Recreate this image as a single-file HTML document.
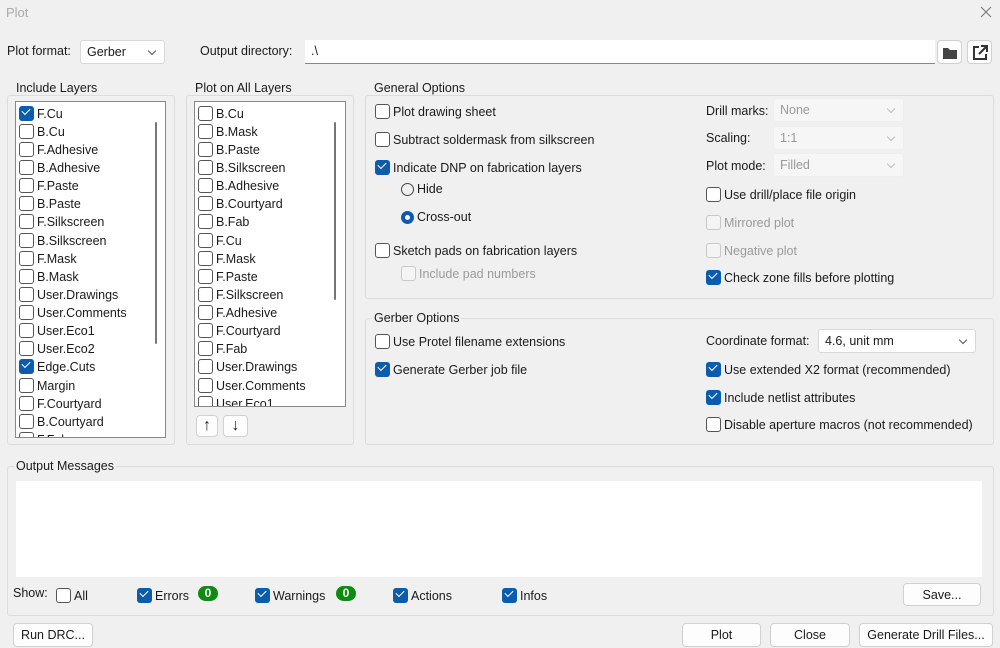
<!DOCTYPE html>
<html><head><meta charset="utf-8"><style>
*{box-sizing:border-box}
body{margin:0;width:1000px;height:648px;background:#f0f0f0;font-family:"Liberation Sans",sans-serif;font-size:12.5px;color:#1a1a1a;position:relative;overflow:hidden}
.a{position:absolute;white-space:nowrap}
.g{position:absolute;border:1px solid #dcdcdc;border-radius:3px}
.gl{position:absolute;background:#f0f0f0;padding:0 2px;white-space:nowrap}
.cb{position:absolute;white-space:nowrap;line-height:14px}
.cb::before{content:"";display:inline-block;width:13px;height:13px;border:1px solid #555;border-radius:3px;vertical-align:-3px;margin-right:3px;background:#fff}
.cb.c::before{background:#0b5cad;border-color:#0b5cad}
.cb.c .k{position:absolute;left:3px;top:2px;width:8px;height:5px;border-left:1.6px solid #fff;border-bottom:1.6px solid #fff;transform:rotate(-45deg)}
.cb.d{color:#9a9a9a}.cb.d::before{border-color:#c8c8c8;background:#f4f4f4}
.list{position:absolute;background:#fff;border:1px solid #888;overflow:hidden}
.list .cb{left:3px}
.sb{position:absolute;width:2px;background:#777;border-radius:1px}
.btn{position:absolute;background:#fdfdfd;border:1px solid #d0d0d0;border-radius:4px;text-align:center;line-height:22px}
.sel{position:absolute;border:1px solid #d8d8d8;border-radius:3px;background:#fff;padding-left:6px;line-height:22px}
.sel::after{content:"";position:absolute;right:9px;top:7px;width:5px;height:5px;border-right:1px solid #555;border-bottom:1px solid #555;transform:rotate(45deg)}
.sel.d{background:#f6f6f6;color:#999;border-color:#eee}
.sel.d::after{border-color:#bbb}
.badge{position:absolute;width:20px;height:15px;border-radius:8px;background:#0f8a12;color:#fff;font-weight:bold;text-align:center;line-height:15px;font-size:12px}
</style></head><body>
<div class="a" style="left:6px;top:5px;color:#aaa;font-size:13px">Plot</div>
<svg class="a" style="left:980px;top:6px" width="12" height="12" viewBox="0 0 12 12"><path d="M1 1L11 11M11 1L1 11" stroke="#777" stroke-width="1.1"/></svg>

<div class="a" style="left:7px;top:44px">Plot format:</div>
<div class="sel" style="left:80px;top:40px;width:85px;height:24px">Gerber</div>
<div class="a" style="left:200px;top:44px">Output directory:</div>
<div class="a" style="left:305px;top:40px;width:630px;height:24px;background:#fff;border-bottom:1px solid #888;padding-left:6px;line-height:22px">.\</div>
<div class="btn" style="left:937px;top:40px;width:25px;height:24px"><svg width="16" height="14" style="margin-top:5px" viewBox="0 0 16 14"><path d="M1 2h5l2 2h7v9H1z" fill="#444"/></svg></div>
<div class="btn" style="left:967px;top:40px;width:25px;height:24px"><svg width="16" height="16" style="margin-top:4px" viewBox="0 0 16 16"><path d="M7 2H2v12h12V9" fill="none" stroke="#333" stroke-width="2"/><path d="M9 1h6v6M15 1L7 9" fill="none" stroke="#333" stroke-width="2"/></svg></div>

<div class="g" style="left:7px;top:95px;width:168px;height:350px"></div>
<div class="gl" style="left:14px;top:81px">Include Layers</div>
<div class="list" style="left:15px;top:101px;width:151px;height:337px">
<div class="sb" style="left:139px;top:20px;height:222px"></div>
<div class="cb c" style="top:4px"><i class="k"></i>F.Cu</div>
<div class="cb" style="top:22px">B.Cu</div>
<div class="cb" style="top:40px">F.Adhesive</div>
<div class="cb" style="top:58px">B.Adhesive</div>
<div class="cb" style="top:76px">F.Paste</div>
<div class="cb" style="top:94px">B.Paste</div>
<div class="cb" style="top:112px">F.Silkscreen</div>
<div class="cb" style="top:131px">B.Silkscreen</div>
<div class="cb" style="top:149px">F.Mask</div>
<div class="cb" style="top:167px">B.Mask</div>
<div class="cb" style="top:185px">User.Drawings</div>
<div class="cb" style="top:203px">User.Comments</div>
<div class="cb" style="top:221px">User.Eco1</div>
<div class="cb" style="top:239px">User.Eco2</div>
<div class="cb c" style="top:257px"><i class="k"></i>Edge.Cuts</div>
<div class="cb" style="top:276px">Margin</div>
<div class="cb" style="top:294px">F.Courtyard</div>
<div class="cb" style="top:312px">B.Courtyard</div>
<div class="cb" style="top:330px">F.Fab</div>
</div>

<div class="g" style="left:186px;top:95px;width:168px;height:350px"></div>
<div class="gl" style="left:193px;top:81px">Plot on All Layers</div>
<div class="list" style="left:194px;top:101px;width:152px;height:306px">
<div class="sb" style="left:139px;top:20px;height:178px"></div>
<div class="cb" style="top:4px">B.Cu</div>
<div class="cb" style="top:22px">B.Mask</div>
<div class="cb" style="top:40px">B.Paste</div>
<div class="cb" style="top:58px">B.Silkscreen</div>
<div class="cb" style="top:76px">B.Adhesive</div>
<div class="cb" style="top:94px">B.Courtyard</div>
<div class="cb" style="top:112px">B.Fab</div>
<div class="cb" style="top:131px">F.Cu</div>
<div class="cb" style="top:149px">F.Mask</div>
<div class="cb" style="top:167px">F.Paste</div>
<div class="cb" style="top:185px">F.Silkscreen</div>
<div class="cb" style="top:203px">F.Adhesive</div>
<div class="cb" style="top:221px">F.Courtyard</div>
<div class="cb" style="top:239px">F.Fab</div>
<div class="cb" style="top:257px">User.Drawings</div>
<div class="cb" style="top:276px">User.Comments</div>
<div class="cb" style="top:294px">User.Eco1</div>
</div>
<div class="btn" style="left:196px;top:415px;width:22px;height:22px;font-size:16px;line-height:20px">↑</div>
<div class="btn" style="left:223px;top:415px;width:25px;height:22px;font-size:16px;line-height:20px">↓</div>

<div class="g" style="left:365px;top:95px;width:629px;height:204px"></div>
<div class="gl" style="left:372px;top:81px">General Options</div>
<div class="cb" style="left:375px;top:104px">Plot drawing sheet</div>
<div class="cb" style="left:375px;top:132px">Subtract soldermask from silkscreen</div>
<div class="cb c" style="left:375px;top:160px"><i class="k"></i>Indicate DNP on fabrication layers</div>
<div class="a" style="left:401px;top:182px"><span style="display:inline-block;width:13px;height:13px;border:1px solid #444;border-radius:50%;vertical-align:-3px;margin-right:3px"></span>Hide</div>
<div class="a" style="left:401px;top:210px"><span style="display:inline-block;width:13px;height:13px;border:4px solid #0b5cad;border-radius:50%;vertical-align:-3px;margin-right:3px;background:#fff"></span>Cross-out</div>
<div class="cb" style="left:375px;top:243px">Sketch pads on fabrication layers</div>
<div class="cb d" style="left:401px;top:266px">Include pad numbers</div>
<div class="a" style="left:706px;top:104px">Drill marks:</div>
<div class="a" style="left:706px;top:131px">Scaling:</div>
<div class="a" style="left:706px;top:159px">Plot mode:</div>
<div class="sel d" style="left:773px;top:98px;width:131px;height:24px">None</div>
<div class="sel d" style="left:773px;top:126px;width:131px;height:24px">1:1</div>
<div class="sel d" style="left:773px;top:153px;width:131px;height:24px">Filled</div>
<div class="cb" style="left:706px;top:187px">Use drill/place file origin</div>
<div class="cb d" style="left:706px;top:215px">Mirrored plot</div>
<div class="cb d" style="left:706px;top:243px">Negative plot</div>
<div class="cb c" style="left:706px;top:270px"><i class="k"></i>Check zone fills before plotting</div>

<div class="g" style="left:365px;top:318px;width:629px;height:127px"></div>
<div class="gl" style="left:372px;top:311px">Gerber Options</div>
<div class="cb" style="left:375px;top:334px">Use Protel filename extensions</div>
<div class="cb c" style="left:375px;top:362px"><i class="k"></i>Generate Gerber job file</div>
<div class="a" style="left:706px;top:334px">Coordinate format:</div>
<div class="sel" style="left:818px;top:329px;width:158px;height:24px">4.6, unit mm</div>
<div class="cb c" style="left:706px;top:362px"><i class="k"></i>Use extended X2 format (recommended)</div>
<div class="cb c" style="left:706px;top:390px"><i class="k"></i>Include netlist attributes</div>
<div class="cb" style="left:706px;top:417px">Disable aperture macros (not recommended)</div>

<div class="g" style="left:7px;top:466px;width:987px;height:150px"></div>
<div class="gl" style="left:14px;top:459px">Output Messages</div>
<div class="a" style="left:16px;top:481px;width:966px;height:96px;background:#fff"></div>
<div class="a" style="left:13px;top:586px">Show:</div>
<div class="cb" style="left:56px;top:588px">All</div>
<div class="cb c" style="left:137px;top:588px"><i class="k"></i>Errors</div>
<div class="badge" style="left:198px;top:586px">0</div>
<div class="cb c" style="left:255px;top:588px"><i class="k"></i>Warnings</div>
<div class="badge" style="left:336px;top:586px">0</div>
<div class="cb c" style="left:393px;top:588px"><i class="k"></i>Actions</div>
<div class="cb c" style="left:502px;top:588px"><i class="k"></i>Infos</div>
<div class="btn" style="left:903px;top:583px;width:78px;height:23px">Save...</div>

<div class="btn" style="left:13px;top:623px;width:80px;height:24px">Run DRC...</div>
<div class="btn" style="left:682px;top:623px;width:79px;height:24px">Plot</div>
<div class="btn" style="left:770px;top:623px;width:80px;height:24px">Close</div>
<div class="btn" style="left:859px;top:623px;width:134px;height:24px">Generate Drill Files...</div>
</body></html>
